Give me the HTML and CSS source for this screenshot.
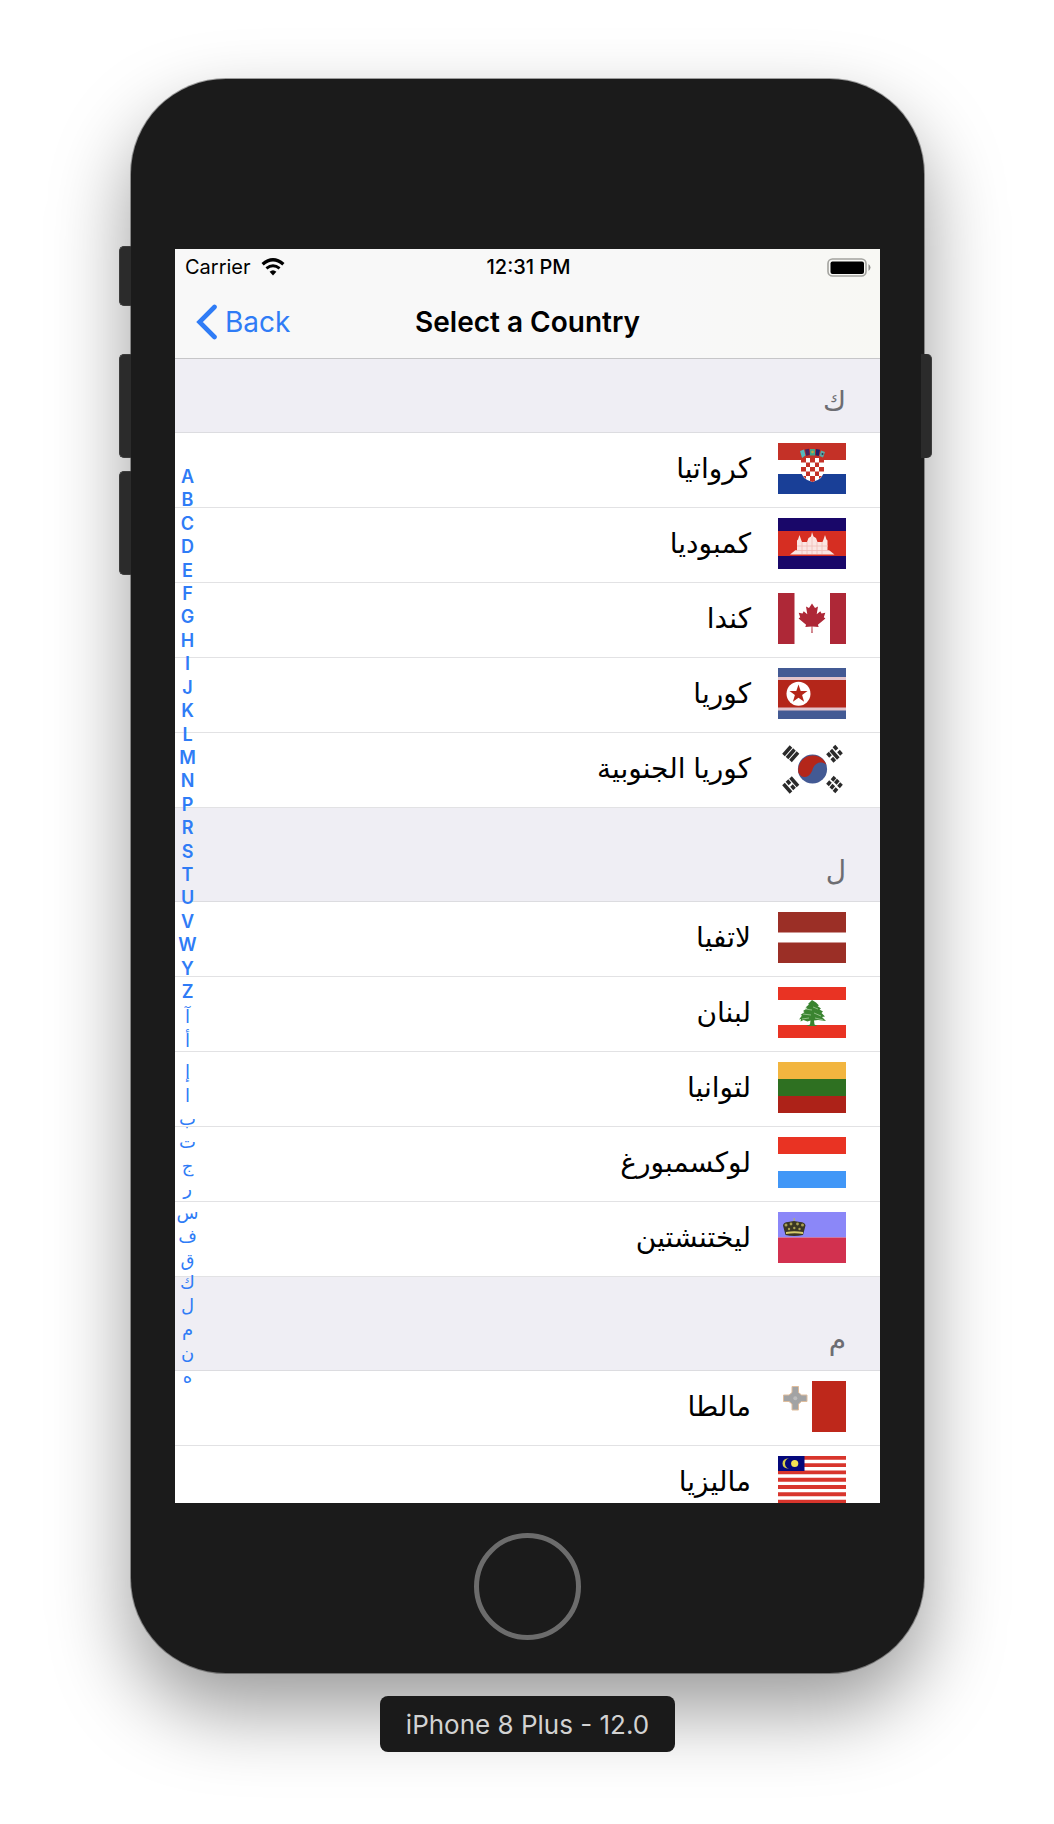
FILE: index.html
```html
<!DOCTYPE html>
<html lang="en">
<head>
<meta charset="utf-8">
<meta name="viewport" content="width=device-width, initial-scale=1">
<title>Select a Country</title>
<link rel="stylesheet" href="styles.css">
</head>
<body>
<main class="stage">
  <div class="phone">
    <span class="side-key side-key-mute"></span>
    <span class="side-key side-key-up"></span>
    <span class="side-key side-key-down"></span>
    <span class="side-key side-key-power"></span>

    <div class="screen">
      <header class="top">
        <div class="status">
          <div class="carrier">
            <span>Carrier</span>
            <svg class="wifi" viewBox="0 0 24 18" aria-hidden="true">
              <path d="M1.6 6.2Q12-2.6 22.4 6.2" fill="none" stroke="#000" stroke-width="3.4"/>
              <path d="M5.4 10.4Q12 5 18.6 10.4" fill="none" stroke="#000" stroke-width="2.8"/>
              <path d="M8.6 13.7Q12 10.6 15.4 13.7L12 17.4Z"/>
            </svg>
          </div>
          <time class="clock">12:31 PM</time>
          <svg class="battery" viewBox="0 0 45 19" aria-hidden="true">
            <rect x="1" y="1" width="38" height="17" rx="4.5" fill="none" stroke="#a3a39f" stroke-width="1.6"/>
            <rect x="3.500" y="3.500" width="33.500" height="12.500" rx="2"/>
            <path d="M41.500 6Q45.500 9.500 41.500 13Z" fill="#8d8d8a"/>
          </svg>
        </div>
        <div class="navbar">
          <button class="back" type="button">
            <svg class="chevron" viewBox="0 0 22 36" aria-hidden="true">
              <path d="M18.500 3 3.500 18 18.500 33" fill="none" stroke="#2f7cf6" stroke-width="4.600" stroke-linecap="round"/>
            </svg>
            <span>Back</span>
          </button>
          <h1 class="title">Select a Country</h1>
        </div>
      </header>

      <div class="content">
        <section class="group" dir="rtl" lang="ar">
          <h2 class="group-head">ك</h2>
          <ul class="rows">
            <li><a class="row" href="#hr">
              <svg class="flag" viewBox="0 0 68 51" aria-hidden="true">
                <path fill="#fff" d="M0 0h68v51H0z"/>
                <path fill="#c43127" d="M0 0h68v17H0z"/>
                <path fill="#193f97" d="M0 31h68v20H0z"/>
                <path fill="#fff" d="M23 15h23v12q0 9-11.500 12Q23 36 23 27z"/>
                <path fill="#c43127" d="M23 15h5v4.500h-5zM32 15h5v4.500h-5zM41 15h5v4.500h-5zM28 19.500h4V24h-4zM37 19.500h4V24h-4zM23 24h5v4.500h-5zM32 24h5v4.500h-5zM41 24h5v4.500h-5zM28 28.500h4V33h-4zM37 28.500h4V33h-4zM32 33h5v5l-2.500 1-2.500-1zM25 33h3v3zM41 33h3l-3 3z"/>
                <path fill="#54b8bd" d="M22 8l4-1.500 1.500 6L24 15z"/>
                <path fill="#47205f" d="M27 6.500l4-.8.8 6-3.500 1.300z"/>
                <path fill="#3fa58b" d="M32 6h5v6.500h-5z"/>
                <path fill="#20206b" d="M38 6l4 .8-1.200 6.200-3.300-.8z"/>
                <path fill="#5aa9a5" d="M43 7.500l4 1.500-2 5.500-3.500-1.500z"/>
                <circle cx="34.500" cy="9" r="1.300" fill="#c6a542"/>
                <circle cx="44.500" cy="11" r="1" fill="#33314f"/>
              </svg>
              <span class="name">كرواتيا</span></a></li>
            <li><a class="row" href="#kh">
              <svg class="flag" viewBox="0 0 68 51" aria-hidden="true">
                <path fill="#190769" d="M0 0h68v51H0z"/>
                <path fill="#d62e22" d="M0 13h68v25H0z"/>
                <path fill="#fbe5e2" d="M12 36.500l5-4h2v-10l1-1 1.500-4.500 1.500 4.500 1 2.500h5l1.500-4 2.500-1.500L34 14l1.500 4.500L38 20l1.500 4h5l1-2.500L47 17l1.500 4.500 1 1v10h2l5 4z"/>
                <path stroke="#f0bcb7" stroke-width=".8" fill="none" d="M19 28h31M17 32.500h34M24 24v12M29 24v12M34 19v17M39 24v12M44 24v12"/>
              </svg>
              <span class="name">كمبوديا</span></a></li>
            <li><a class="row" href="#ca">
              <svg class="flag" viewBox="0 0 68 51" aria-hidden="true">
                <path fill="#fff" d="M0 0h68v51H0z"/>
                <path fill="#ae2837" d="M0 0h16.500v51H0zM52 0h16v51H52zM34 10.500l3 4.500 3-1.400-1.300 7.600 3.600-3 1.200 2.200 3.800-.6-1.500 4.500 1.600 1.200-7.500 6.200.8 2.300-6.300-.5.200 6.500h-1.200l.2-6.500-6.300.5.800-2.300-7.500-6.200 1.600-1.200-1.500-4.500 3.800.6 1.200-2.200 3.600 3-1.300-7.600 3 1.400z"/>
              </svg>
              <span class="name">كندا</span></a></li>
            <li><a class="row" href="#kp">
              <svg class="flag" viewBox="0 0 68 51" aria-hidden="true">
                <path fill="#435a94" d="M0 0h68v51H0z"/>
                <path fill="#e2c3cb" d="M0 9h68v33.500H0z"/>
                <path fill="#b4261a" d="M0 12h68v27.500H0z"/>
                <circle cx="20.500" cy="25.700" r="12" fill="#fff"/>
                <path fill="#b4261a" d="M20.500 16.500l2.200 6.400h6.800l-5.400 4.200 2 6.600-5.600-3.900-5.600 3.900 2-6.600-5.400-4.200h6.800z"/>
              </svg>
              <span class="name">كوريا</span></a></li>
            <li><a class="row" href="#kr">
              <svg class="flag" viewBox="0 0 68 51" aria-hidden="true">
                <circle cx="34.500" cy="26" r="14.600" fill="#435a94"/>
                <path fill="#b4261a" d="M20.500 30A14.600 14.600 0 0 1 48.300 21.500C44 18 37.500 19 34.800 25.500 33 34 25 37.500 20.500 30z"/>
                <g stroke="#2a2a2a" stroke-width="3.500" fill="none">
                  <path d="M5.500 12l7.500-8.500M9 15l7.500-8.500M12.500 18l7.500-8.500"/>
                  <path d="M49.500 10l3 3.500M53.800 15l3 3.500M52.800 7l7.500 8.500M56 3l3 3.500M60.500 8l3 3.500"/>
                  <path d="M5.500 41l7.500 8.500M9 37.500l3 3.500M13.500 42.500l3 3.500M12.500 34.500l7.500 8.500"/>
                  <path d="M49.500 42l3-3.500M54 37.500l3-3.500M52.800 45.500l3-3.500M57.300 40.500l3-3.500M56 49l3-3.500M60.500 44l3-3.500"/>
                </g>
              </svg>
              <span class="name">كوريا الجنوبية</span></a></li>
          </ul>
        </section>

        <section class="group" dir="rtl" lang="ar">
          <h2 class="group-head">ل</h2>
          <ul class="rows">
            <li><a class="row" href="#lv">
              <svg class="flag" viewBox="0 0 68 51" aria-hidden="true">
                <path fill="#fff" d="M0 0h68v51H0z"/>
                <path fill="#9b2f26" d="M0 0h68v20.500H0zM0 30.500h68V51H0z"/>
              </svg>
              <span class="name">لاتفيا</span></a></li>
            <li><a class="row" href="#lb">
              <svg class="flag" viewBox="0 0 68 51" aria-hidden="true">
                <path fill="#fff" d="M0 0h68v51H0z"/>
                <path fill="#e93323" d="M0 0h68v13H0zM0 38h68v13H0z"/>
                <path fill="#3a8430" d="M34 13l4 2.500 3 3-1.500.5 3.500 2.500-1.500 1 3.500 2-1.500 1.500 3.500 3.500-3 .5 4 4-8-1-4 .5.500 4 3 1.500H28l4-1.500.5-4-3 1-4-1.500-3 1.500.5-2.500-2 .5 3-4-1.500-.5 4-3-1.500-1 4.500-3-2-.5 3.500-3-1-.5z"/>
                <path fill="none" stroke="#a5cd9c" stroke-width=".8" d="M27 22l7 1M35 20l5 2M25 27l8 1M36 26l7 3M24 32l7-1M37 31l8 2"/>
              </svg>
              <span class="name">لبنان</span></a></li>
            <li><a class="row" href="#lt">
              <svg class="flag" viewBox="0 0 68 51" aria-hidden="true">
                <path fill="#f2b53f" d="M0 0h68v17H0z"/>
                <path fill="#2e7021" d="M0 17h68v17H0z"/>
                <path fill="#ad2218" d="M0 34h68v17H0z"/>
              </svg>
              <span class="name">لتوانيا</span></a></li>
            <li><a class="row" href="#lu">
              <svg class="flag" viewBox="0 0 68 51" aria-hidden="true">
                <path fill="#e93323" d="M0 0h68v17H0z"/>
                <path fill="#fff" d="M0 17h68v17H0z"/>
                <path fill="#4197f7" d="M0 34h68v17H0z"/>
              </svg>
              <span class="name">لوكسمبورغ</span></a></li>
            <li><a class="row" href="#li">
              <svg class="flag" viewBox="0 0 68 51" aria-hidden="true">
                <path fill="#8b87f8" d="M0 0h68v25.500H0z"/>
                <path fill="#d2314f" d="M0 25.500h68V51H0z"/>
                <path fill="#a9a58c" d="M15.500 6h1.500v4h-1.500z"/>
                <path fill="#3a3623" d="M7.500 23L5 13.500Q5.500 10 10 10l6-1 6 1q5 0 5.500 3.500L25 23q-9 2-17.500 0z"/>
                <path fill="#d6cc6b" d="M8 20q8-1.500 17 0v2q-8-1.500-17 0z"/>
                <g fill="#a89f52"><circle cx="8" cy="13" r="1.500"/><circle cx="13" cy="12" r="1.400"/><circle cx="19.500" cy="12" r="1.400"/><circle cx="24.500" cy="13" r="1.500"/><circle cx="11" cy="17" r="1.200"/><circle cx="16.300" cy="16" r="1.200"/><circle cx="21.500" cy="17" r="1.200"/></g>
              </svg>
              <span class="name">ليختنشتين</span></a></li>
          </ul>
        </section>

        <section class="group" dir="rtl" lang="ar">
          <h2 class="group-head">م</h2>
          <ul class="rows">
            <li><a class="row" href="#mt">
              <svg class="flag" viewBox="0 0 68 51" aria-hidden="true">
                <path fill="#be281b" d="M34 0h34v51H34z"/>
                <path fill="#a2a3a4" stroke="#dfbd9c" stroke-width="1" d="M14 5.500h6.500v6l3 2.500H29v6.500h-5.500l-3 2.500v6H14v-6L11 20.500H5.500V14H11l3-2.500z"/>
                <circle cx="17.300" cy="17.300" r="2" fill="#bcbcbc"/>
              </svg>
              <span class="name">مالطا</span></a></li>
            <li><a class="row" href="#my">
              <svg class="flag" viewBox="0 0 68 51" aria-hidden="true">
                <path fill="#fff" d="M0 0h68v51H0z"/>
                <path stroke="#d8352c" stroke-width="3.900" fill="none" d="M0 1.800h68M0 9.100h68M0 16.400h68M0 23.700h68M0 31h68M0 38.300h68M0 45.600h68"/>
                <path fill="#04087b" d="M0 0h26.500v15H0z"/>
                <path fill="#d9cf4a" d="M11 2.200Q7 3.500 7 7.500t4 5.300Q4.500 12.500 4.500 7.500T11 2.200z"/>
                <circle cx="16.700" cy="7.500" r="3.600" fill="#f3e353"/>
              </svg>
              <span class="name">ماليزيا</span></a></li>
          </ul>
        </section>

        <nav class="index" aria-label="Section index">
          <a href="#A">A</a><a href="#B">B</a><a href="#C">C</a><a href="#D">D</a><a href="#E">E</a><a href="#F">F</a><a href="#G">G</a><a href="#H">H</a><a href="#I">I</a><a href="#J">J</a><a href="#K">K</a><a href="#L">L</a><a href="#M">M</a><a href="#N">N</a><a href="#P">P</a><a href="#R">R</a><a href="#S">S</a><a href="#T">T</a><a href="#U">U</a><a href="#V">V</a><a href="#W">W</a><a href="#Y">Y</a><a href="#Z">Z</a>
          <a class="alef" href="#آ">آ</a><a class="alef" href="#أ">أ</a>
          <a class="arabic" href="#إ">إ</a><a class="arabic" href="#ا">ا</a><a class="arabic" href="#ب">ب</a><a class="arabic" href="#ت">ت</a><a class="arabic" href="#ج">ج</a><a class="arabic" href="#ر">ر</a><a class="arabic" href="#س">س</a><a class="arabic" href="#ف">ف</a><a class="arabic" href="#ق">ق</a><a class="arabic" href="#ك">ك</a><a class="arabic" href="#ل">ل</a><a class="arabic" href="#م">م</a><a class="arabic" href="#ن">ن</a><a class="arabic" href="#ه">ه</a>
        </nav>
      </div>
    </div>

    <div class="chin">
      <button class="home" type="button" aria-label="Home"></button>
    </div>
  </div>
  <p class="caption">iPhone 8 Plus - 12.0</p>
</main>
</body>
</html>
```
FILE: styles.css
```css
* {
  box-sizing: border-box;
}

body {
  margin: 0;
  background: #fff;
  color: #000;
  font-family: Inter, "DejaVu Sans", sans-serif;
}

button {
  padding: 0;
  border: 0;
  background: none;
  font: inherit;
  cursor: pointer;
}

a {
  color: inherit;
  text-decoration: none;
}

.stage {
  display: flex;
  flex-direction: column;
  align-items: center;
  padding: 79px 130px 72px 131px;
}

/* Device body */
.phone {
  position: relative;
  width: 100%;
  max-width: 800px;
  padding: 170px 44px 0;
  border-radius: 95px;
  background: #1b1b1b;
  box-shadow: 0 0 0 1px rgba(0, 0, 0, .35), 0 37px 80px rgba(0, 0, 0, .4);
}

.side-key {
  position: absolute;
  left: -12px;
  width: 12px;
  height: 104px;
  border: 1px solid #3c3c3c;
  border-right: 0;
  border-radius: 5px 0 0 5px;
  background: #2b2b2b;
}

.side-key-mute {
  top: 167px;
  height: 60px;
}

.side-key-up {
  top: 275px;
}

.side-key-down {
  top: 392px;
}

.side-key-power {
  top: 275px;
  right: -8px;
  left: auto;
  width: 11px;
  border: 0;
  border-right: 1px solid #3c3c3c;
  border-radius: 0 5px 5px 0;
}

.chin {
  display: flex;
  justify-content: center;
  padding: 30px 0 33px;
}

.home {
  width: 107px;
  height: 107px;
  border: 5px solid #6c6c6c;
  border-radius: 50%;
}

.caption {
  margin: 23px 0 0;
  padding: 13px 26px 11px;
  border-radius: 8px;
  background: #1a1a1a;
  color: #d2d2d2;
  font-size: 26px;
  line-height: 32px;
  z-index: 1;
}

/* Screen */
.screen {
  display: flex;
  flex-direction: column;
  aspect-ratio: 705 / 1254;
  overflow: hidden;
  background: #fff;
}

.top {
  flex: none;
  border-bottom: 1px solid #c6c6c8;
  background: linear-gradient(90deg, #f8f8f8 70%, #f8f8f4);
}

.status {
  display: grid;
  grid-template-columns: 1fr auto 1fr;
  align-items: center;
  height: 36px;
  padding: 0 8px 0 10px;
  font-size: 20px;
  line-height: 24px;
}

.carrier {
  display: flex;
  align-items: center;
  gap: 10px;
}

.wifi {
  width: 24px;
  height: 18px;
}

.clock {
  font-weight: 500;
}

.battery {
  justify-self: end;
  width: 45px;
  height: 19px;
}

.navbar {
  display: grid;
  grid-template-columns: 1fr auto 1fr;
  align-items: center;
  height: 73px;
  padding: 0 21px;
}

.back {
  display: flex;
  align-items: center;
  gap: 7px;
  color: #2f7cf6;
  font-size: 28px;
  line-height: 36px;
}

.chevron {
  width: 22px;
  height: 36px;
}

.title {
  margin: 0;
  font-size: 28px;
  font-weight: 600;
  line-height: 36px;
}

/* Country list */
.content {
  position: relative;
  flex: 1;
  min-height: 0;
  overflow: hidden;
}

.group-head {
  display: flex;
  align-items: flex-end;
  height: 94px;
  margin: 0;
  padding: 0 34px 13px;
  border-bottom: 1px solid #dcdce0;
  background: #efeef4;
  color: #6d6d72;
  font-size: 28px;
  font-weight: 400;
  line-height: 36px;
}

.group:first-child .group-head {
  height: 74px;
}

.rows {
  margin: 0;
  padding: 0;
  list-style: none;
}

.row {
  display: flex;
  gap: 27px;
  padding: 10px 34px 13px;
  border-bottom: 1px solid #e2e2e4;
}

.flag {
  flex: none;
  width: 68px;
  height: 51px;
}

.name {
  font-size: 28px;
  line-height: 51px;
}

/* Letter index, floating over the list */
.index {
  position: absolute;
  top: 106px;
  bottom: 125px;
  left: 0;
  display: grid;
  grid-auto-rows: minmax(0, 1fr);
  width: 25px;
  color: #2f7cf6;
  font-size: 18px;
  font-weight: 600;
  line-height: 23px;
  text-align: center;
}

.index .alef,
.index .arabic {
  font-weight: 400;
  line-height: 27px;
}

.index .arabic {
  line-height: 43px;
}
```
